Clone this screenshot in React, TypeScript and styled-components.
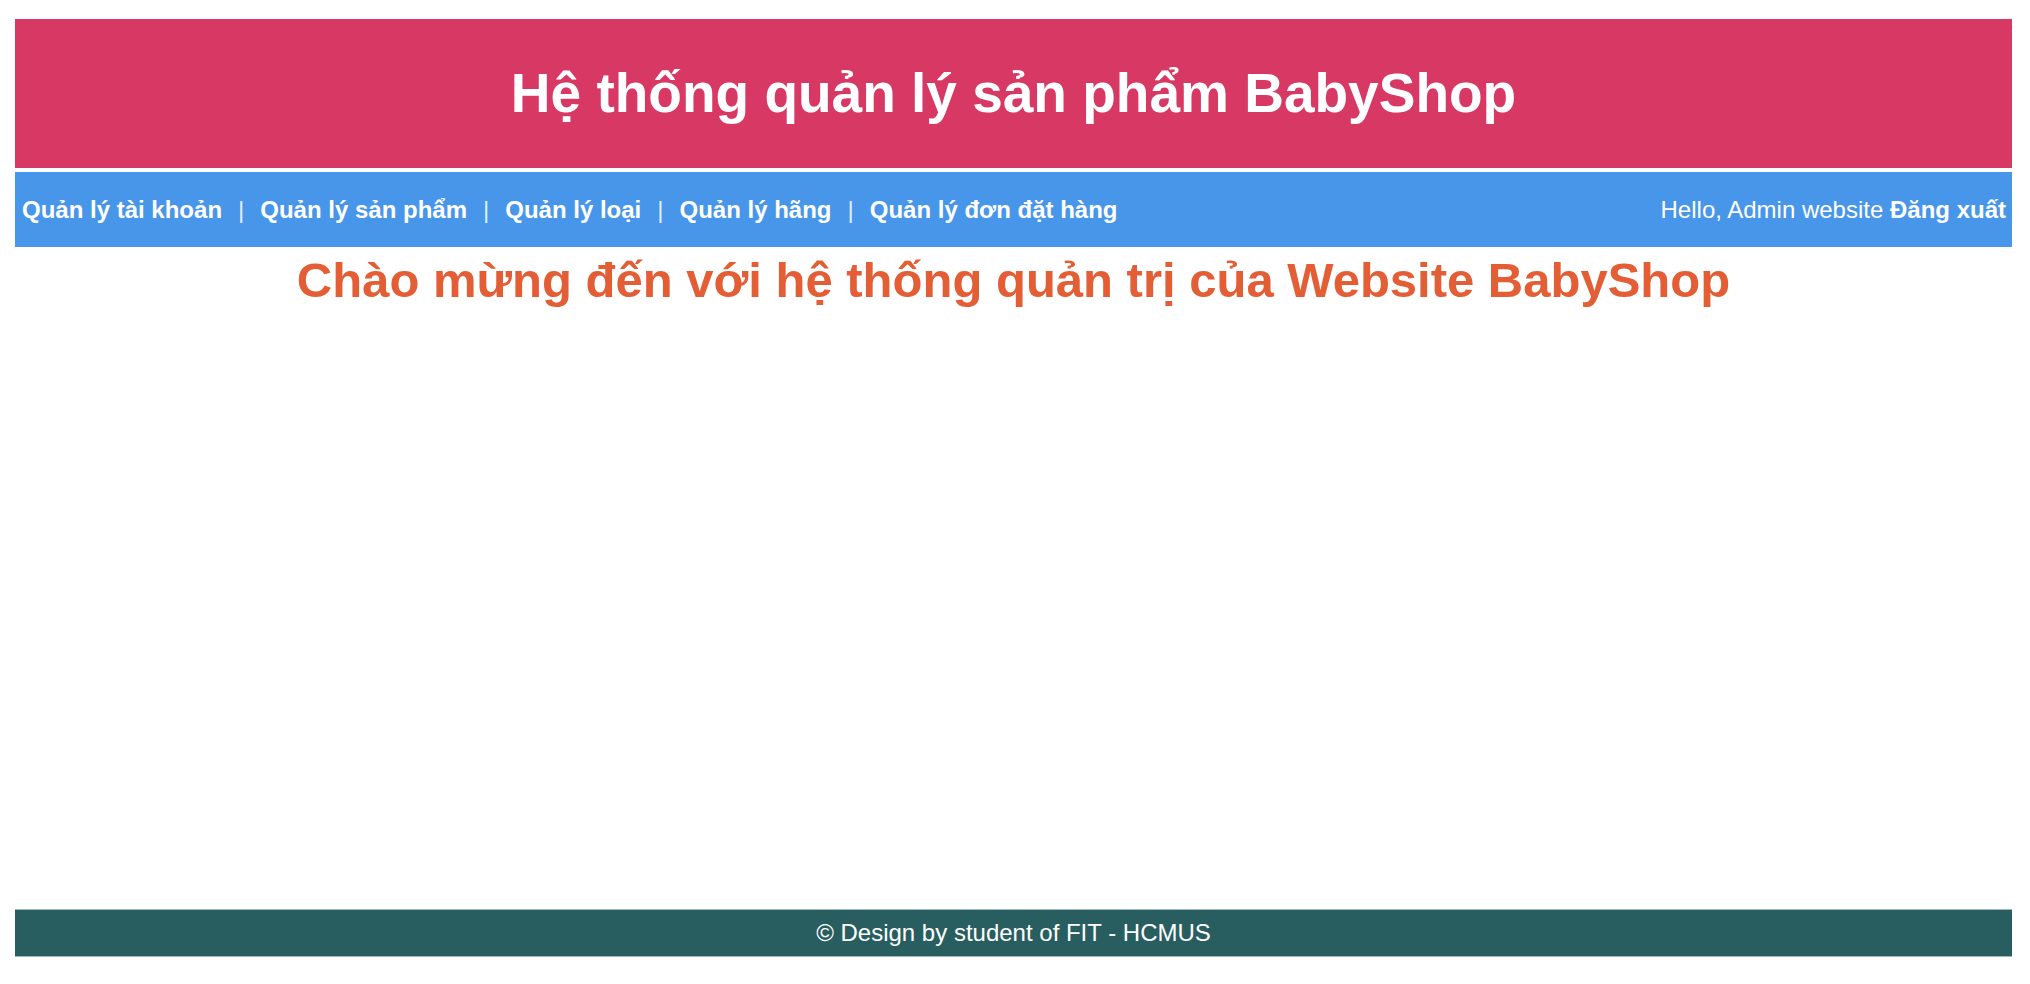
import React from "react";
import styled, { createGlobalStyle } from "styled-components";

const GlobalStyle = createGlobalStyle`
  html, body {
    margin: 0;
    padding: 0;
    background: #ffffff;
  }
  body {
    font-family: "Liberation Sans", Arial, Helvetica, sans-serif;
  }
`;

const Page = styled.div`
  margin: 19px 18px 0 15px;
  overflow: hidden;
`;

const Header = styled.header`
  height: 149px;
  background: #d83864;
  display: flex;
  align-items: center;
  justify-content: center;
  margin-bottom: 4px;
`;

const Title = styled.h1`
  margin: 0;
  color: #ffffff;
  font-size: 55px;
  font-weight: 700;
  line-height: 1;
`;

const Nav = styled.nav`
  height: 75px;
  background: #4896ea;
  display: flex;
  align-items: center;
  justify-content: space-between;
  padding-left: 7px;
  overflow: hidden;
  white-space: nowrap;
`;

const Menu = styled.div`
  display: flex;
  align-items: center;
  gap: 16px;
`;

const MenuLink = styled.a`
  color: #ffffff;
  font-size: 24px;
  font-weight: 700;
  text-decoration: none;
`;

const Sep = styled.span`
  color: rgba(255, 255, 255, 0.85);
  font-size: 24px;
  font-weight: 400;
`;

const UserBox = styled.div`
  color: #ffffff;
  font-size: 24px;
  font-weight: 400;
  margin-right: 6px;
`;

const Logout = styled.a`
  color: #ffffff;
  font-weight: 700;
  text-decoration: none;
`;

const Main = styled.main`
  height: 662px;
  padding-top: 5px;
  box-sizing: border-box;
`;

const Welcome = styled.h2`
  margin: 0;
  text-align: center;
  color: #e35d35;
  font-size: 49px;
  font-weight: 700;
  line-height: 1.15;
`;

const Footer = styled.footer`
  height: 48px;
  background: #295e60;
  color: #ffffff;
  font-size: 24px;
  display: flex;
  align-items: center;
  justify-content: center;
  box-sizing: border-box;
  border-top: 1px solid #9fb9ba;
  border-bottom: 1px solid #9fb9ba;
`;

const links = [
  "Quản lý tài khoản",
  "Quản lý sản phẩm",
  "Quản lý loại",
  "Quản lý hãng",
  "Quản lý đơn đặt hàng",
];

export default function App() {
  return (
    <>
      <GlobalStyle />
      <Page>
        <Header>
          <Title>Hệ thống quản lý sản phẩm BabyShop</Title>
        </Header>
        <Nav>
          <Menu>
            {links.map((l, i) => (
              <React.Fragment key={l}>
                {i > 0 && <Sep>|</Sep>}
                <MenuLink href="#">{l}</MenuLink>
              </React.Fragment>
            ))}
          </Menu>
          <UserBox>
            Hello, Admin website <Logout href="#">Đăng xuất</Logout>
          </UserBox>
        </Nav>
        <Main>
          <Welcome>Chào mừng đến với hệ thống quản trị của Website BabyShop</Welcome>
        </Main>
        <Footer>© Design by student of FIT - HCMUS</Footer>
      </Page>
    </>
  );
}
